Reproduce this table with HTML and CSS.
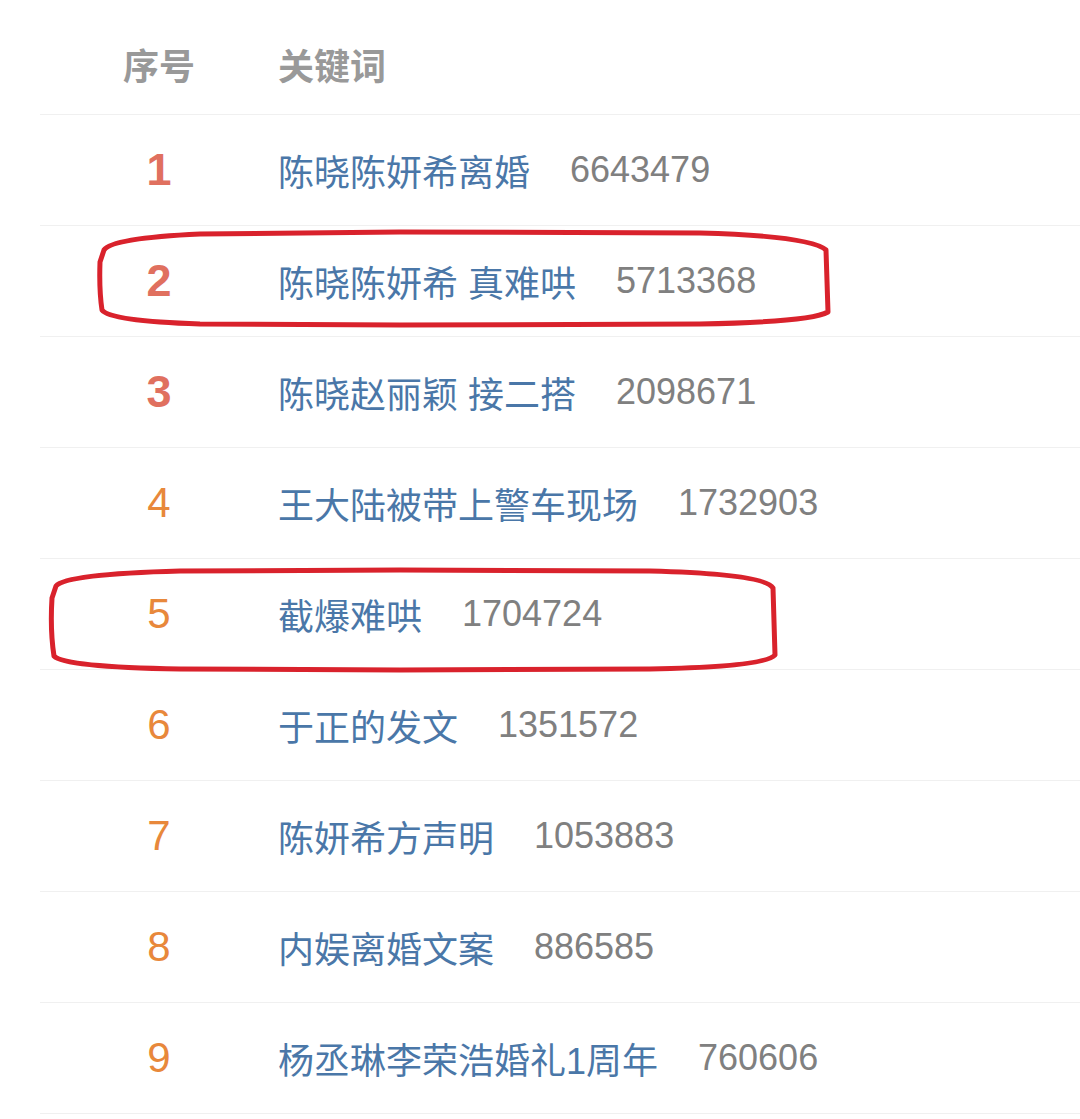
FILE: index.html
```html
<!DOCTYPE html>
<html lang="zh-CN">
<head>
<meta charset="utf-8">
<title>热搜关键词</title>
<link rel="stylesheet" href="styles.css">
</head>
<body>
<div class="page">
  <div class="table">
    <div class="row head">
      <div class="rank">序号</div>
      <div class="kw">关键词</div>
    </div>
    <div class="row">
      <div class="rank top">1</div>
      <div class="kw"><span class="word">陈晓陈妍希离婚</span><span class="num">6643479</span></div>
    </div>
    <div class="row">
      <div class="rank top">2</div>
      <div class="kw"><span class="word">陈晓陈妍希 真难哄</span><span class="num">5713368</span></div>
    </div>
    <div class="row">
      <div class="rank top">3</div>
      <div class="kw"><span class="word">陈晓赵丽颖 接二搭</span><span class="num">2098671</span></div>
    </div>
    <div class="row">
      <div class="rank">4</div>
      <div class="kw"><span class="word">王大陆被带上警车现场</span><span class="num">1732903</span></div>
    </div>
    <div class="row">
      <div class="rank">5</div>
      <div class="kw"><span class="word">截爆难哄</span><span class="num">1704724</span></div>
    </div>
    <div class="row">
      <div class="rank">6</div>
      <div class="kw"><span class="word">于正的发文</span><span class="num">1351572</span></div>
    </div>
    <div class="row">
      <div class="rank">7</div>
      <div class="kw"><span class="word">陈妍希方声明</span><span class="num">1053883</span></div>
    </div>
    <div class="row">
      <div class="rank">8</div>
      <div class="kw"><span class="word">内娱离婚文案</span><span class="num">886585</span></div>
    </div>
    <div class="row">
      <div class="rank">9</div>
      <div class="kw"><span class="word">杨丞琳李荣浩婚礼1周年</span><span class="num">760606</span></div>
    </div>
  </div>
  <svg class="marks" width="1080" height="1119" viewBox="0 0 1080 1119" aria-hidden="true">
    <path d="M104 250 Q112 238 200 234 L400 232 L700 233 Q810 236 826 250 L828 312 Q810 322 700 324 L400 325 L200 324 Q110 321 102 310 Q99 290 100 262 Z"/>
    <path d="M56 586 Q66 574 180 571 L400 570 L650 571 Q765 574 773 588 L775 655 Q765 667 650 669 L400 670 L180 669 Q64 667 54 656 Q50 630 52 598 Z"/>
  </svg>
</div>
</body>
</html>
```

FILE: styles.css
```css
html, body {
  margin: 0;
  padding: 0;
  background: #ffffff;
}

.page {
  position: relative;
  width: 1080px;
  height: 1119px;
  overflow: hidden;
  font-family: "Liberation Sans", "Noto Sans CJK SC", sans-serif;
}

.table {
  padding-left: 40px;
}

.row {
  display: flex;
  align-items: center;
  height: 110px;
  border-bottom: 1px solid #f0f0f0;
}

.row.head {
  height: 100px;
  padding-top: 14px;
}

.rank {
  width: 238px;
  flex: none;
  text-align: center;
  font-size: 42px;
  color: #e8883b;
}

.rank.top {
  font-weight: bold;
  font-size: 45px;
  color: #e0705f;
}

.head .rank,
.head .kw {
  font-size: 36px;
  font-weight: bold;
  color: #999999;
}

.kw {
  display: flex;
  align-items: center;
  font-size: 36px;
  white-space: nowrap;
}

.word {
  color: #4a77a8;
}

.num {
  margin-left: 40px;
  color: #808080;
}

.marks {
  position: absolute;
  left: 0;
  top: 0;
  pointer-events: none;
}

.marks path {
  fill: none;
  stroke: #d9222c;
  stroke-width: 5;
  stroke-linejoin: round;
}
```
